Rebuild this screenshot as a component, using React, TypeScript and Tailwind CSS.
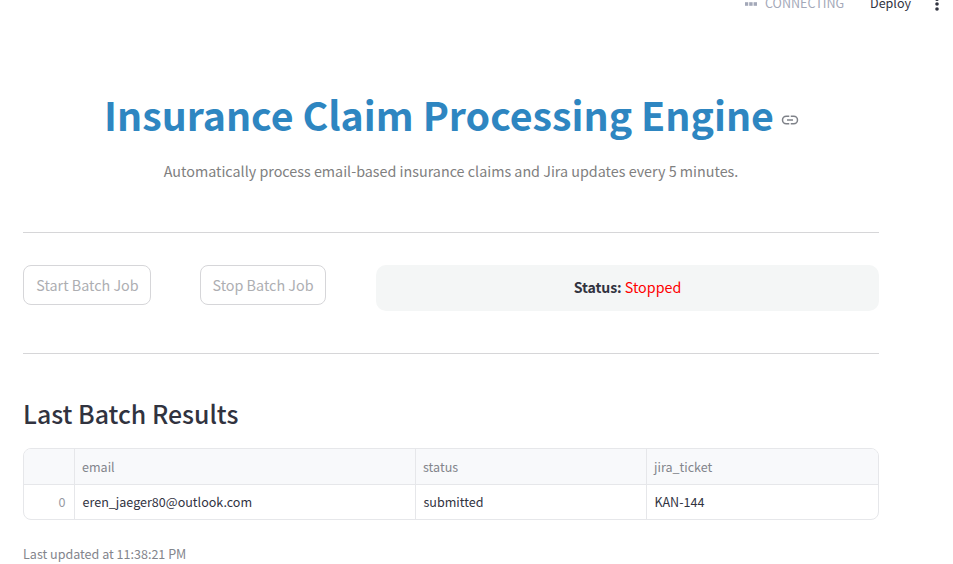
import React from 'react';

function LinkIcon() {
  return (
    <svg
      width="18"
      height="18"
      viewBox="0 0 24 24"
      fill="none"
      stroke="#7f8289"
      strokeWidth="2"
      className="mt-[12px] shrink-0"
    >
      <path d="M11 7H7a5 5 0 0 0 0 10h4M13 7h4a5 5 0 0 1 0 10h-4M8 12h8" />
    </svg>
  );
}

function Toolbar() {
  return (
    <header className="flex h-4 items-start overflow-hidden pl-[745px] text-[12.55px] leading-4">
      <svg width="20" height="8" viewBox="0 0 20 8" fill="#a3a8b8" className="shrink-0">
        <rect x="-0.2" y="2.2" width="3.4" height="3.6" />
        <rect x="4.2" y="2.2" width="3.4" height="3.6" />
        <rect x="8.6" y="2.2" width="3.4" height="3.6" />
      </svg>
      <span className="-mt-[5px] w-[105px] text-[#a3a8b8]">CONNECTING</span>
      <span className="-mt-[5px] w-[65px] text-[#31333f]">Deploy</span>
      <svg width="4" height="12" viewBox="0 0 4 12" fill="#31333f">
        <circle cx="2" cy="-0.8" r="1.8" />
        <circle cx="2" cy="4" r="1.8" />
        <circle cx="2" cy="9" r="1.8" />
      </svg>
    </header>
  );
}

function JobButton({ label, width }: { label: string; width: string }) {
  return (
    <button
      disabled
      className={`h-10 rounded-lg border border-[#d6d6d9] text-[14.33px] leading-6 whitespace-nowrap text-[#adaeb2] ${width}`}
    >
      {label}
    </button>
  );
}

export default function App() {
  return (
    <div className="h-[564px] w-[953px] overflow-hidden bg-white font-['Noto_Sans_CJK_SC','Noto_Sans',sans-serif] text-[#31333f]">
      <Toolbar />
      <main className="ml-[23px] w-[856px]">
        <div className="mt-[71px] mb-[19px] flex h-[53px] items-center pl-[81px]">
          <h1 className="w-[677px] text-[39.35px] leading-[53px] font-bold whitespace-nowrap text-[#2e86c1]">
            Insurance Claim Processing Engine
          </h1>
          <LinkIcon />
        </div>
        <p className="h-6 text-center text-[14.33px] leading-6 whitespace-nowrap text-[#808080]">
          Automatically process email-based insurance claims and Jira updates every 5 minutes.
        </p>
        <hr className="mt-[49px] border-[#d6d6d8]" />
        <div className="mt-8 flex h-[46px] items-start">
          <JobButton label="Start Batch Job" width="w-[128px] pl-px" />
          <div className="w-[49px]" />
          <JobButton label="Stop Batch Job" width="w-[126px]" />
          <div className="ml-[50px] h-[46px] flex-1 rounded-[10px] bg-[#f4f6f6] text-center text-[14.3px] leading-[44px]">
            <span className="text-[14.1px] font-bold tracking-[-0.08px]">Status:</span>{' '}
            <span className="text-[#ff0000]">Stopped</span>
          </div>
        </div>
        <hr className="mt-[42px] border-[#d6d6d8]" />
        <h3 className="mt-[42px] mb-[18px] h-[34px] text-[24.9px] leading-[34px] font-medium">Last Batch Results</h3>
        <div className="grid h-[72px] grid-cols-[51px_341px_231px_1fr] grid-rows-[36px_34px] overflow-hidden rounded-lg border border-[#e6e7ea] text-[12.55px] leading-[36px]">
          <div className="border-r border-b border-[#e6e7ea] bg-[#f8f9fb]" />
          <div className="border-r border-b border-[#e6e7ea] bg-[#f8f9fb] pl-[7px] text-[#83858c]">email</div>
          <div className="border-r border-b border-[#e6e7ea] bg-[#f8f9fb] pl-[7px] text-[#83858c]">status</div>
          <div className="border-b border-[#e6e7ea] bg-[#f8f9fb] pl-[7px] text-[#83858c]">jira_ticket</div>
          <div className="border-r border-[#e6e7ea] pr-[8.5px] text-right leading-[34px] text-[#979aa3]">0</div>
          <div className="border-r border-[#e6e7ea] pl-[7.5px] leading-[34px]">eren_jaeger80@outlook.com</div>
          <div className="border-r border-[#e6e7ea] pl-[7.5px] leading-[34px]">submitted</div>
          <div className="pl-[7.5px] leading-[34px]">KAN-144</div>
        </div>
        <p className="mt-[23px] text-[12.55px] leading-[21px] text-[#83858c]">Last updated at 11:38:21 PM</p>
      </main>
    </div>
  );
}
